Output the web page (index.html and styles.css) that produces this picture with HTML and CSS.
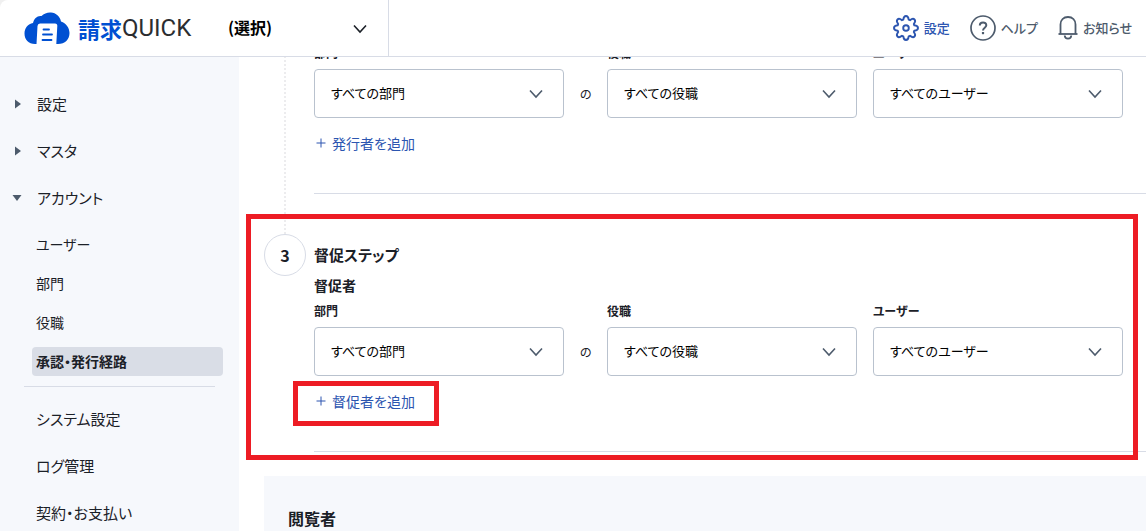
FILE: index.html
```
<!DOCTYPE html>
<html lang="ja">
<head>
<meta charset="UTF-8">
<meta name="viewport" content="width=device-width, initial-scale=1.0">
<title>承認・発行経路 | 請求QUICK</title>
<link rel="stylesheet" href="styles.css">
</head>
<body>

<!-- shared icons -->
<svg class="sprite" aria-hidden="true">
  <symbol id="chevron" viewBox="0 0 14 10">
    <path d="M1 1.5 L7 8 L13 1.5" fill="none" stroke="currentColor" stroke-width="1.6"/>
  </symbol>
</svg>

<header class="header">
  <div class="header-left">
    <a class="logo" href="#">
      <svg class="logo-mark" viewBox="0 0 46 33" aria-hidden="true">
        <path d="M11 32 C4.500 32 0.500 27.500 0.500 21.500 C0.500 16 4 11.800 9 11 C10 6.500 13.500 3.200 17.500 4 C20 1.500 23.500 0.300 27 0.600 C32 1 36 4.500 37 9.500 C42 11 45.500 16 45.500 21 C45.500 27.500 41 32 34 32 Z" fill="#0050d2"/>
        <path d="M16 11.500 H31 Q33.500 11.500 33.300 14 L32.300 32 H12.500 L13.500 14 Q13.700 11.500 16 11.500 Z" fill="#fff"/>
        <path d="M19.500 17.500 H25 M19 22.500 H28 M18.500 28 H27.500" stroke="#0050d2" stroke-width="1.800" stroke-linecap="round"/>
      </svg>
      <span class="logo-ja">請求</span><span class="logo-en">QUICK</span>
    </a>
    <div class="select-box shop">
      <select aria-label="事業所">
        <option>(選択)</option>
      </select>
      <svg class="chevron"><use href="#chevron"/></svg>
    </div>
  </div>
  <nav class="actions">
    <a class="action active" href="#">
      <svg viewBox="0 0 26 26" width="26" height="26" fill="none" stroke="currentColor" stroke-width="1.900" stroke-linejoin="round" aria-hidden="true">
        <path d="M10.300 4.700 Q10.700 1 13 1 Q15.300 1 15.700 4.700 L17 5.200 Q19.900 2.900 21.500 4.500 Q23.100 6.100 20.800 9 L21.300 10.300 Q25 10.700 25 13 Q25 15.300 21.300 15.700 L20.800 17 Q23.100 19.900 21.500 21.500 Q19.900 23.100 17 20.800 L15.700 21.300 Q15.300 25 13 25 Q10.700 25 10.300 21.300 L9 20.800 Q6.100 23.100 4.500 21.500 Q2.900 19.900 5.200 17 L4.700 15.700 Q1 15.300 1 13 Q1 10.700 4.700 10.300 L5.200 9 Q2.900 6.100 4.500 4.500 Q6.100 2.900 9 5.200 Z"/>
        <circle cx="13" cy="13" r="2.800"/>
      </svg>
      設定
    </a>
    <a class="action" href="#">
      <svg viewBox="0 0 26 26" width="26" height="26" fill="none" stroke="currentColor" stroke-width="1.700" aria-hidden="true">
        <circle cx="13" cy="13" r="12"/>
        <path d="M9.800 10.500 C9.800 6.500 16.300 6.500 16.300 10.300 C16.300 12.700 13 12.700 13 15.500" stroke-width="2"/>
        <path d="M13 17 V19.200" stroke-width="2.200"/>
      </svg>
      ヘルプ
    </a>
    <a class="action" href="#">
      <svg viewBox="0 0 20 26" width="20" height="26" fill="none" stroke="currentColor" stroke-width="1.800" aria-hidden="true">
        <path d="M0.500 19 H19.500"/>
        <path d="M2.500 19 V9.500 C2.500 5 5.500 2 10 2 C14.500 2 17.500 5 17.500 9.500 V19"/>
        <path d="M6.700 20.500 C7 24.700 13 24.700 13.300 20.500"/>
      </svg>
      お知らせ
    </a>
  </nav>
</header>

<div class="layout">
  <nav class="sidebar">
    <button class="group" type="button"><svg class="arrow" viewBox="0 0 10 10"><path d="M3 0.500 L9 5 L3 9.500 Z"/></svg>設定</button>
    <button class="group" type="button"><svg class="arrow" viewBox="0 0 10 10"><path d="M3 0.500 L9 5 L3 9.500 Z"/></svg>マスタ</button>
    <button class="group" type="button" aria-expanded="true"><svg class="arrow" viewBox="0 0 10 10"><path d="M0.500 2 H9.500 L5 8 Z"/></svg>アカウント</button>
    <ul class="submenu">
      <li><a href="#">ユーザー</a></li>
      <li><a href="#">部門</a></li>
      <li><a href="#">役職</a></li>
      <li><a class="current" href="#">承認・発行経路</a></li>
    </ul>
    <hr>
    <a class="item" href="#">システム設定</a>
    <a class="item" href="#">ログ管理</a>
    <a class="item" href="#">契約・お支払い</a>
  </nav>

  <main class="content">
    <div class="steps">
      <section class="step">
        <div class="rail"></div>
        <div class="step-body">
          <div class="fields">
            <label for="issueDept">部門</label>
            <div class="select-box">
              <select id="issueDept"><option>すべての部門</option></select>
              <svg class="chevron"><use href="#chevron"/></svg>
            </div>
            <span class="joint">の</span>
            <label for="issueRole">役職</label>
            <div class="select-box">
              <select id="issueRole"><option>すべての役職</option></select>
              <svg class="chevron"><use href="#chevron"/></svg>
            </div>
            <label for="issueUser">ユーザー</label>
            <div class="select-box">
              <select id="issueUser"><option>すべてのユーザー</option></select>
              <svg class="chevron"><use href="#chevron"/></svg>
            </div>
          </div>
          <div class="add-row">
            <button class="add" type="button"><svg class="plus" viewBox="0 0 10 10"><path d="M5 0.500 V9.500 M0.500 5 H9.500"/></svg>発行者を追加</button>
          </div>
        </div>
      </section>

      <section class="step marked">
        <div class="rail"><span class="number">3</span></div>
        <div class="step-body">
          <h2>督促ステップ</h2>
          <h3>督促者</h3>
          <div class="fields">
            <label for="remindDept">部門</label>
            <div class="select-box">
              <select id="remindDept"><option>すべての部門</option></select>
              <svg class="chevron"><use href="#chevron"/></svg>
            </div>
            <span class="joint">の</span>
            <label for="remindRole">役職</label>
            <div class="select-box">
              <select id="remindRole"><option>すべての役職</option></select>
              <svg class="chevron"><use href="#chevron"/></svg>
            </div>
            <label for="remindUser">ユーザー</label>
            <div class="select-box">
              <select id="remindUser"><option>すべてのユーザー</option></select>
              <svg class="chevron"><use href="#chevron"/></svg>
            </div>
          </div>
          <div class="add-row marked">
            <button class="add" type="button"><svg class="plus" viewBox="0 0 10 10"><path d="M5 0.500 V9.500 M0.500 5 H9.500"/></svg>督促者を追加</button>
          </div>
        </div>
      </section>
    </div>

    <section class="viewers">
      <h2>閲覧者</h2>
    </section>
  </main>
</div>

</body>
</html>
```
FILE: styles.css
```
* {
  box-sizing: border-box;
}

body {
  display: flex;
  flex-direction: column;
  height: 100vh;
  margin: 0;
  overflow: hidden;
  background: #f0f0f0;
  color: #1b2027;
  font-family: "Noto Sans CJK JP", sans-serif;
  font-feature-settings: "palt";
  font-size: 14px;
  line-height: 20px;
}

a {
  color: inherit;
  text-decoration: none;
}

button, select {
  font: inherit;
  font-feature-settings: inherit;
  color: inherit;
  border: none;
  background: none;
  padding: 0;
  cursor: pointer;
}

h2, h3 {
  margin: 0;
  font-weight: 700;
}

h2 {
  font-size: 16px;
  line-height: 24px;
}

h3 {
  font-size: 14px;
}

.sprite {
  display: none;
}

/* header */
.header {
  display: flex;
  flex: none;
  justify-content: space-between;
  height: 57px;
  border-bottom: 1px solid #d8dce6;
  border-top-left-radius: 8px;
  background: #fff;
}

.header-left {
  display: flex;
  align-items: center;
  width: 389px;
  padding-left: 24px;
  border-right: 1px solid #d8dce6;
}

.logo {
  display: flex;
  align-items: center;
  width: 204px;
  white-space: nowrap;
}

.logo-mark {
  width: 46px;
  height: 33px;
  margin-right: 8px;
}

.logo-ja {
  color: #0050d2;
  font-size: 22px;
  font-weight: 700;
  line-height: 32px;
}

.logo-en {
  color: #2b2d30;
  font-family: Roboto, sans-serif;
  font-size: 24px;
  line-height: 32px;
}

.select-box {
  position: relative;
}

.select-box select {
  appearance: none;
  width: 100%;
  height: 49px;
  padding: 0 40px 2px 16px;
  border: 1px solid #b9c2ce;
  border-radius: 4px;
  background: #fff;
  color: #000;
  font-size: 13px;
}

.chevron {
  position: absolute;
  top: 20px;
  right: 21px;
  width: 14px;
  height: 10px;
  color: #4d5b6c;
  pointer-events: none;
}

.shop {
  flex: 1;
}

.select-box.shop select {
  padding-left: 0;
  border: none;
  font-size: 16px;
  font-weight: 700;
}

.shop .chevron {
  color: #1b2027;
}

.actions {
  display: flex;
  align-items: center;
  gap: 20px;
  padding-right: 14px;
}

.action {
  display: flex;
  align-items: center;
  gap: 5px;
  color: #4d5b6c;
  font-size: 13px;
  font-weight: 500;
}

.action.active {
  color: #2c55b0;
}

/* sidebar */
.layout {
  display: flex;
  flex: 1;
  min-height: 0;
}

.sidebar {
  flex: none;
  width: 239px;
  padding-top: 23px;
  overflow: hidden;
  background: #f6f8fc;
}

.group, .item {
  display: flex;
  align-items: center;
  width: 100%;
  height: 47px;
  font-size: 15px;
}

.group {
  gap: 15px;
  padding-left: 12px;
}

.item {
  padding-left: 36px;
}

.arrow {
  width: 10px;
  height: 10px;
  fill: #4d5b6c;
}

.submenu {
  display: flex;
  flex-direction: column;
  gap: 10px;
  margin: 9px 16px 10px 32px;
  padding: 0;
  list-style: none;
}

.submenu a {
  display: block;
  padding-left: 4px;
  border-radius: 4px;
  line-height: 29px;
}

.submenu .current {
  background: #d9dde6;
  font-weight: 700;
}

.sidebar hr {
  margin: 0 24px 8px;
  border: none;
  border-top: 1px solid #d8dce6;
}

/* steps */
.content {
  flex: 1;
  min-width: 0;
  padding-left: 25px;
  overflow: hidden;
  background: #fff;
}

/* list is scrolled so the first labels sit under the header */
.steps {
  margin-top: -13px;
}

.step {
  position: relative;
  display: grid;
  grid-template-columns: 42px minmax(0, 1fr);
  column-gap: 8px;
}

.step:not(:last-child) .rail::after {
  content: "";
  display: block;
  height: 100%;
  width: 2px;
  margin: 0 auto;
  background: repeating-linear-gradient(#ececee 0 2px, #fff 2px 4px);
}

.number {
  display: flex;
  align-items: center;
  justify-content: center;
  width: 42px;
  height: 42px;
  border: 1px solid #d8dce6;
  border-radius: 50%;
  font-size: 16px;
  font-weight: 700;
}

.step-body {
  margin-bottom: 40px;
  padding-bottom: 40px;
  border-bottom: 1px solid #d8dce6;
}

.step:last-child .step-body {
  margin-bottom: 24px;
}

.step h2 {
  padding: 9px 0 8px;
  font-size: 15px;
}

.fields {
  display: grid;
  grid-template-columns: minmax(0, 250px) 11px minmax(0, 250px) minmax(0, 250px);
  grid-template-rows: 18px 49px;
  grid-auto-flow: column;
  column-gap: 16px;
  row-gap: 7px;
  padding-right: 23px;
}

.fields label {
  font-size: 12px;
  font-weight: 700;
  line-height: 18px;
}

.joint {
  grid-row: 2;
  align-self: center;
  font-size: 12px;
}

.step h3 + .fields {
  margin-top: 7px;
}

.add-row {
  position: relative;
  width: max-content;
  margin-top: 15px;
}

.add {
  display: flex;
  align-items: center;
  gap: 6px;
  padding-left: 2px;
  color: #2c55b0;
}

.plus {
  width: 10px;
  height: 10px;
  fill: none;
  stroke: currentColor;
}

/* red frames drawn over the form */
.marked::after {
  content: "";
  position: absolute;
  border: 5px solid #ed1c24;
  pointer-events: none;
}

.step.marked::after {
  inset: -20px 8px 16px -18px;
}

.add-row.marked::after {
  inset: -10px -24px -15px -21px;
}

.viewers {
  padding: 30px 24px;
  background: #f6f8fc;
}
```
